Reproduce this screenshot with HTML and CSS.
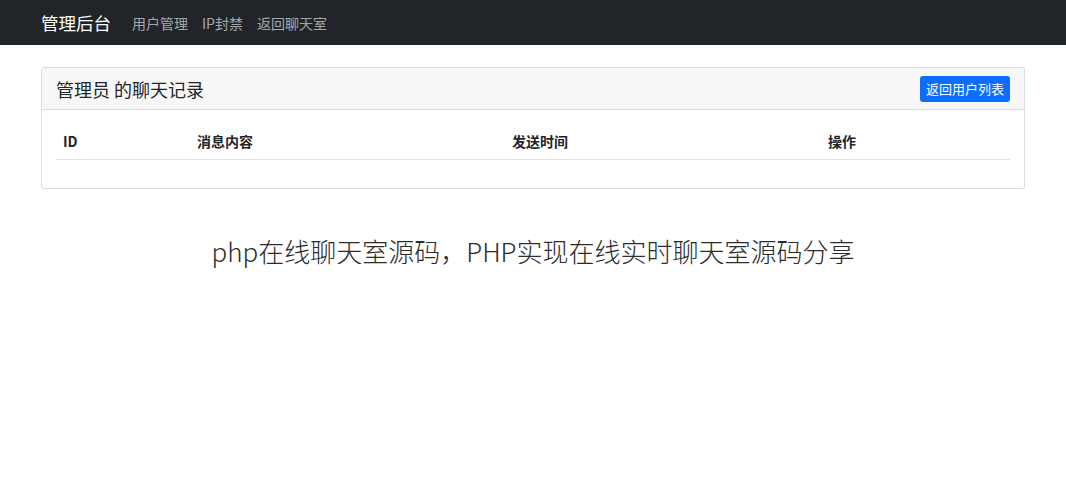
FILE: index.html
```html
<!DOCTYPE html>
<html lang="zh-CN">
<head>
<meta charset="utf-8">
<title>管理后台</title>
<link rel="stylesheet" href="styles.css">
</head>
<body>
<nav class="navbar">
  <a class="brand" href="#">管理后台</a>
  <ul class="nav">
    <li><a href="#">用户管理</a></li>
    <li><a href="#">IP封禁</a></li>
    <li><a href="#">返回聊天室</a></li>
  </ul>
</nav>
<main class="container">
  <section class="card">
    <header class="card-header">
      <h2 class="card-title">管理员 的聊天记录</h2>
      <a class="btn" href="#">返回用户列表</a>
    </header>
    <div class="card-body">
      <table class="table">
        <colgroup>
          <col class="c1"><col class="c2"><col class="c3"><col class="c4">
        </colgroup>
        <thead>
          <tr><th>ID</th><th>消息内容</th><th>发送时间</th><th>操作</th></tr>
        </thead>
        <tbody></tbody>
      </table>
    </div>
  </section>
  <p class="caption">php在线聊天室源码，PHP实现在线实时聊天室源码分享</p>
</main>
</body>
</html>
```
FILE: styles.css
```css
* { box-sizing: border-box; }
html, body { margin: 0; padding: 0; background: #fff; }
body {
  font-family: "Noto Sans CJK SC", "Noto Sans", sans-serif;
  color: #212529;
  font-size: 14px;
}
a { text-decoration: none; }
.navbar {
  height: 45px;
  background: #212529;
  display: flex;
  align-items: center;
  padding: 0 41px;
}
.brand {
  color: #fff;
  font-size: 17.5px;
  margin-right: 14px;
  line-height: 1;
}
.nav {
  list-style: none;
  margin: 0;
  padding: 0;
  display: flex;
}
.nav a {
  display: block;
  color: rgba(255,255,255,0.6);
  font-size: 14px;
  padding: 0 7px;
  line-height: 1;
}
.container {
  padding: 22px 41px 0;
}
.card {
  border: 1px solid #dcdcdc;
  border-radius: 3px;
  background: #fff;
}
.card-header {
  display: flex;
  align-items: center;
  justify-content: space-between;
  height: 42px;
  padding: 0 14px;
  background: #f7f7f7;
  border-bottom: 1px solid #dcdcdc;
}
.card-title {
  margin: 0;
  font-size: 18px;
  font-weight: 400;
  color: #212529;
}
.btn {
  background: #0d6efd;
  color: #fff;
  font-size: 13px;
  line-height: 18px;
  padding: 4px 6px;
  border-radius: 3px;
}
.card-body {
  padding: 15px 14px 14px;
}
.table {
  width: 100%;
  border-collapse: collapse;
  margin-bottom: 14px;
}
.c1 { width: 134px; }
.c2 { width: 315px; }
.c3 { width: 316px; }
.table th {
  text-align: left;
  font-size: 14px;
  font-weight: 700;
  padding: 7px 7px 9px;
  line-height: 18px;
  border-bottom: 1px solid #dee2e6;
  color: #212529;
}
.caption {
  margin: 43px 0 0;
  text-align: center;
  font-size: 26px;
  font-weight: 300;
  color: #2b2b2b;
}
```
